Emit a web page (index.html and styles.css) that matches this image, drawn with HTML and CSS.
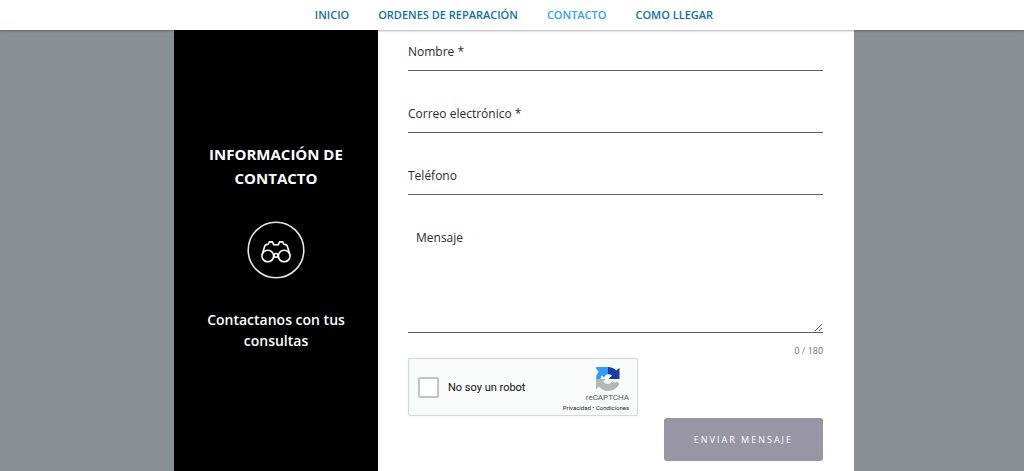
FILE: index.html
```html
<!DOCTYPE html>
<html lang="es">
<head>
<meta charset="utf-8">
<meta name="viewport" content="width=device-width, initial-scale=1">
<title>Contacto</title>
<link rel="stylesheet" href="styles.css">
</head>
<body>
<header class="topbar">
  <nav class="menu">
    <a href="#">INICIO</a>
    <a href="#">ORDENES DE REPARACIÓN</a>
    <a href="#" class="active" aria-current="page">CONTACTO</a>
    <a href="#">COMO LLEGAR</a>
  </nav>
</header>
<main class="page">
  <section class="card">
    <aside class="info">
      <h2 class="info-title">INFORMACIÓN DE CONTACTO</h2>
      <svg class="info-icon" viewBox="0 0 58 58" fill="none" stroke="#fff" aria-hidden="true">
        <circle cx="29" cy="29" r="27.8" stroke="#e4e6e6" stroke-width="1.6"/>
        <g stroke-width="1.6" stroke-linejoin="round" stroke-linecap="round">
          <circle cx="20.8" cy="35" r="5.8"/>
          <circle cx="37.2" cy="35" r="5.8"/>
          <circle cx="29" cy="34.4" r="1.9"/>
          <path d="M15.2 33.4L17.6 25.4Q18.3 23.8 20 23.4L21.4 23L22.4 20.9H25.4L26.8 23.8H31.2L32.6 20.9H35.6L36.6 23L38 23.4Q39.7 23.8 40.4 25.4L42.8 33.4"/>
        </g>
      </svg>
      <p class="info-text">Contactanos con tus consultas</p>
    </aside>
    <form class="form">
      <div class="field">
        <label for="nombre">Nombre *</label>
        <input id="nombre" type="text" required>
      </div>
      <div class="field">
        <label for="correo">Correo electrónico *</label>
        <input id="correo" type="email" required>
      </div>
      <div class="field">
        <label for="telefono">Teléfono</label>
        <input id="telefono" type="tel">
      </div>
      <div class="field message">
        <label for="mensaje">Mensaje</label>
        <textarea id="mensaje" maxlength="180"></textarea>
      </div>
      <div class="counter">0 / 180</div>
      <div class="captcha">
        <input id="robot" type="checkbox">
        <label for="robot">No soy un robot</label>
        <div class="brand">
          <svg class="brand-logo" viewBox="0 0 24 24" aria-hidden="true">
            <path fill="#2f9df4" d="M12 0V7.3Q9 7.5 8.4 10.4L5.7 8.4L4.5 12H0Q0 7.5 2.6 4.4L.2 2V0Z"/>
            <path fill="#1c3aa9" d="M12 0Q17 0 20.4 3.6L23.5.8V12H12.5L16 8.6Q14.7 7.3 12 7.3Z"/>
            <path fill="#b4b7b9" d="M0 12H10L7.2 14.6Q8.6 17 11.6 17Q15 17 16 14L18.7 15.6L21.4 14.4L23.4 17Q19.6 24 12 24Q6.6 24 3 19.6L0 22.6Z"/>
          </svg>
          <div class="brand-name">reCAPTCHA</div>
          <div class="brand-links"><a href="#">Privacidad</a> • <a href="#">Condiciones</a></div>
        </div>
      </div>
      <button class="send" type="submit">ENVIAR MENSAJE</button>
    </form>
  </section>
</main>
</body>
</html>
```
FILE: styles.css
```css
* { box-sizing: border-box; }
body {
  margin: 0;
  min-height: 100vh;
  display: flex;
  flex-direction: column;
  background: #899092;
  font-family: "Open Sans", sans-serif;
}
a { color: inherit; text-decoration: none; }
.topbar {
  position: relative;
  background: #fff;
  box-shadow: 0 1px 2px rgba(0, 0, 0, 0.3);
}
.menu {
  display: flex;
  justify-content: center;
  gap: 29px;
  padding-left: 4px;
  line-height: 30px;
  font-size: 11px;
  font-weight: 600;
  color: #0c71a3;
}
.menu .active { color: #2ea3f2; }
.page {
  flex: 1;
  display: flex;
  justify-content: center;
  padding-left: 4px;
}
.card {
  flex: 0 1 680px;
  display: grid;
  grid-template-columns: 3fr 7fr;
  background: #fff;
}
.info {
  display: flex;
  flex-direction: column;
  align-items: center;
  padding: 112px 24px 24px;
  background: #000;
  color: #fff;
  text-align: center;
}
.info-title {
  margin: 0;
  font-size: 15px;
  line-height: 24px;
  font-weight: 700;
}
.info-icon {
  width: 58px;
  height: 58px;
  margin: 31px 0 30px;
}
.info-text {
  margin: 0;
  font-size: 14px;
  line-height: 21px;
  font-weight: 600;
}
.form {
  display: flex;
  flex-direction: column;
  padding: 1px 31px 10px 30px;
}
.field {
  display: grid;
  margin-bottom: 22px;
  font-size: 12px;
  color: #272c2e;
}
.field label,
.field input,
.field textarea { grid-area: 1 / 1; }
.field label {
  place-self: start;
  padding-top: 2px;
  line-height: 38px;
}
.field input,
.field textarea {
  width: 100%;
  height: 40px;
  border: 0;
  border-bottom: 1px solid #596065;
  border-radius: 0;
  background: transparent;
  font: inherit;
  outline: 0;
}
.field.message { margin-bottom: 10px; }
.field.message label { padding-left: 8px; }
.field textarea {
  display: block;
  height: 116px;
  padding: 10px 8px;
  resize: vertical;
}
.counter {
  align-self: flex-end;
  margin-bottom: -1px;
  color: #777c7e;
  font-family: Roboto, sans-serif;
  font-size: 9px;
  line-height: 16px;
}
.captcha {
  align-self: flex-start;
  display: flex;
  align-items: center;
  width: 230px;
  height: 58px;
  padding: 0 8px 0 9px;
  border: 1px solid #d6d9da;
  border-radius: 2px;
  background: #f9fafa;
  box-shadow: 0 0 2px rgba(0, 0, 0, 0.1);
  font-family: Roboto, sans-serif;
}
.captcha input {
  appearance: none;
  width: 21px;
  height: 21px;
  margin: 0 9px 0 0;
  border: 2px solid #c1c3c4;
  border-radius: 2px;
  background: #fff;
}
.captcha input:checked { background: #2f9df4; }
.captcha label {
  flex: 1;
  font-size: 11px;
  color: #111;
  white-space: nowrap;
}
.brand {
  display: grid;
  justify-items: end;
  padding-top: 6px;
  color: #555;
  white-space: nowrap;
}
.brand-logo {
  width: 24px;
  height: 24px;
  margin-right: 9px;
}
.brand-name {
  margin-top: 2px;
  font-size: 8px;
  line-height: 10px;
}
.brand-links {
  font-size: 6px;
  line-height: 10px;
  color: #222;
}
.send {
  align-self: flex-end;
  margin-top: 2px;
  padding: 0 30px;
  border: 0;
  border-radius: 3px;
  background: #9896a4;
  color: #fff;
  font: 500 9px/43px "Open Sans", sans-serif;
  letter-spacing: 2px;
}
```
